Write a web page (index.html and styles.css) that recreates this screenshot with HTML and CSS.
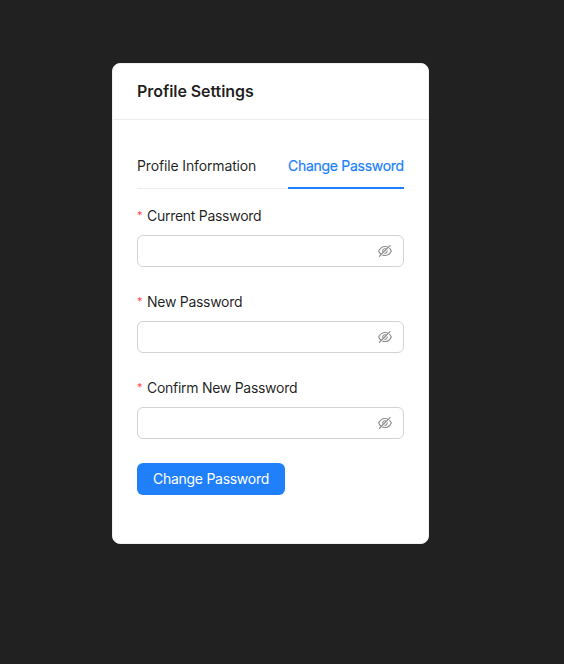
FILE: index.html
```html
<!DOCTYPE html>
<html lang="en">
<head>
<meta charset="utf-8">
<title>Profile Settings</title>
<link rel="stylesheet" href="styles.css">
</head>
<body>
<svg class="sprite" aria-hidden="true">
  <symbol id="eye-off" viewBox="64 64 896 896">
    <path d="M942.2 486.2Q889.47 375.11 816.7 305l-50.88 50.88C807.31 395.53 843.45 447.4 874.7 512 791.5 684.2 673.4 766 512 766q-72.67 0-133.87-22.38L323 798.75Q408 838 512 838q288.3 0 430.2-300.3a60.29 60.29 0 000-51.5zm-63.57-320.64L836 122.88a8 8 0 00-11.32 0L715.31 232.2Q624.86 186 512 186q-288.3 0-430.2 300.3a60.3 60.3 0 000 51.5q56.69 119.4 136.5 191.41L112.48 835a8 8 0 000 11.31L155.17 889a8 8 0 0011.31 0l712.15-712.12a8 8 0 000-11.32zM149.3 512C232.6 339.8 350.7 258 512 258c54.54 0 104.13 9.36 149.12 28.39l-70.3 70.3a176 176 0 00-238.13 238.13l-83.42 83.42C223.1 637.49 183.3 582.28 149.3 512zm246.7 0a112.11 112.11 0 01146.2-106.69L401.31 546.2A112 112 0 01396 512z"/>
    <path d="M508 624c-3.46 0-6.87-.16-10.25-.47l-52.82 52.82a176.09 176.09 0 00227.42-227.42l-52.82 52.82c.31 3.38.47 6.79.47 10.25a111.94 111.94 0 01-112 112z"/>
  </symbol>
</svg>
<main class="card">
  <header class="card-head"><h1>Profile Settings</h1></header>
  <div class="card-body">
    <nav class="tabs">
      <a class="tab">Profile Information</a>
      <a class="tab active">Change Password</a>
    </nav>
    <form>
      <div class="field">
        <label for="current">Current Password</label>
        <div class="control"><input id="current" type="password"><svg class="eye"><use href="#eye-off"/></svg></div>
      </div>
      <div class="field">
        <label for="new">New Password</label>
        <div class="control"><input id="new" type="password"><svg class="eye"><use href="#eye-off"/></svg></div>
      </div>
      <div class="field">
        <label for="confirm">Confirm New Password</label>
        <div class="control"><input id="confirm" type="password"><svg class="eye"><use href="#eye-off"/></svg></div>
      </div>
      <button class="submit" type="button">Change Password</button>
    </form>
  </div>
</main>
</body>
</html>
```
FILE: styles.css
```css
* { box-sizing: border-box; }
body {
  margin: 0;
  min-height: 664px;
  padding-top: 63px;
  background: #212121;
  color: rgba(0, 0, 0, 0.88);
  font: 14px/22px Inter, "Liberation Sans", sans-serif;
  letter-spacing: -0.28px;
}
.sprite { display: none; }
.card {
  width: 317px;
  height: 481px;
  margin-left: 112px;
  background: #fff;
  border: 1px solid #f0f0f0;
  border-radius: 8px;
}
.card-head {
  height: 56px;
  padding: 0 24px 1px;
  display: flex;
  align-items: center;
  border-bottom: 1px solid #ececec;
}
h1 {
  margin: 0;
  font-size: 16px;
  line-height: 24px;
  font-weight: 600;
  letter-spacing: -0.06px;
}
.card-body { padding: 23px 24px 24px; }
.tabs {
  display: flex;
  justify-content: space-between;
  height: 46px;
  margin-bottom: 16px;
  box-shadow: inset 0 -1px #ececec;
}
.tab { padding: 12px 0; white-space: nowrap; letter-spacing: -0.14px; }
.active {
  width: 116px;
  color: #2080fc;
  border-bottom: 2px solid #2080fc;
  letter-spacing: -0.28px;
  -webkit-text-stroke: 0.2px currentColor;
}
.field { margin-bottom: 24px; }
label { display: flex; height: 22px; margin-bottom: 8px; }
label::before {
  content: "*";
  width: 6px;
  margin-right: 4px;
  color: #ff4d4f;
  font-size: 11px;
  line-height: 20px;
}
.control {
  display: flex;
  align-items: center;
  height: 32px;
  padding: 0 11px;
  border: 1px solid #d3d3d3;
  border-radius: 6px;
}
input { flex: 1; min-width: 0; padding: 0; border: 0; outline: 0; background: none; }
.eye { width: 14px; height: 14px; fill: rgba(0, 0, 0, 0.45); }
.submit {
  display: block;
  width: 148px;
  height: 32px;
  padding: 0;
  border: 0;
  border-radius: 6px;
  background: #2080fc;
  color: #fff;
  font: inherit;
  letter-spacing: inherit;
}
```
